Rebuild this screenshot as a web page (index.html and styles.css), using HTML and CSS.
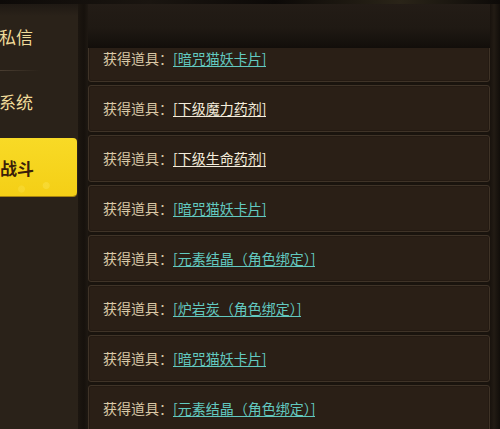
FILE: index.html
```html
<!DOCTYPE html>
<html lang="zh">
<head>
<meta charset="utf-8">
<title>战斗日志</title>
<link rel="stylesheet" href="styles.css">
</head>
<body>
<div class="screen">
  <div class="topstrip"></div>
  <div class="main">
    <nav class="tabs">
      <div class="tab">私信</div>
      <div class="sep"></div>
      <div class="tab">系统</div>
      <div class="tab active">战斗</div>
    </nav>
    <div class="divider"></div>
    <section class="log">
      <div class="header"></div>
      <div class="list">
        <div class="rows">
          <div class="row"><span class="label">获得道具：</span><span class="item teal">[暗咒猫妖卡片]</span></div>
          <div class="row"><span class="label">获得道具：</span><span class="item white">[下级魔力药剂]</span></div>
          <div class="row"><span class="label">获得道具：</span><span class="item white">[下级生命药剂]</span></div>
          <div class="row"><span class="label">获得道具：</span><span class="item teal">[暗咒猫妖卡片]</span></div>
          <div class="row"><span class="label">获得道具：</span><span class="item teal">[元素结晶（角色绑定）]</span></div>
          <div class="row"><span class="label">获得道具：</span><span class="item teal">[炉岩炭（角色绑定）]</span></div>
          <div class="row"><span class="label">获得道具：</span><span class="item teal">[暗咒猫妖卡片]</span></div>
          <div class="row"><span class="label">获得道具：</span><span class="item teal">[元素结晶（角色绑定）]</span></div>
        </div>
      </div>
    </section>
    <div class="edge"></div>
  </div>
</div>
</body>
</html>
```

FILE: styles.css
```css
html, body { margin:0; padding:0; background:#16110c; }
body { font-family:"Noto Sans CJK SC", "Noto Sans", sans-serif; }

.screen { width:500px; height:429px; overflow:hidden; display:flex; flex-direction:column; }
.topstrip { height:4px; background:linear-gradient(90deg, #0d0a08, #1a1510 30%, #0c0907 55%, #2a2418 80%, #0d0a08); }
.main { flex:1; display:flex; min-height:0; }

/* left tabs */
.tabs { width:78px; background:linear-gradient(#1f1913, #2a2219 12px, #2a2219); padding-top:2px; box-sizing:border-box; }
.tab { height:60px; display:flex; align-items:center; font-size:17px; color:#f1dc9a; margin-left:-1px; }
.sep { height:1px; margin-top:4px; background:linear-gradient(90deg, #4a3e31, rgba(74,62,49,0) 40px); }
.tab + .tab { height:57px; }
.tab.active { height:58px; margin-top:7px; margin-left:0; width:77px; box-sizing:border-box;
  background:radial-gradient(circle at 60% 82%, rgba(255,240,120,.25) 0 3px, transparent 4px),
             radial-gradient(circle at 28% 88%, rgba(255,240,120,.2) 0 3px, transparent 4px),
             linear-gradient(#f8da26, #f4cf16);
  border-radius:0 4px 4px 0; color:#3b1e0a; font-weight:bold; box-shadow:0 1px 0 #a8840e; }

.divider { width:10px; background:linear-gradient(90deg, #1c1610, #16110c 60%, #1e1812); }

/* log panel */
.log { width:402px; display:flex; flex-direction:column; background:#1a140e; }
.header { height:44px; background:linear-gradient(#231c16, #1f1913 55%, #120e0a); flex:none; }
.list { flex:1; overflow:hidden; }
.rows { margin-top:-13px; }
.row { height:47px; margin-bottom:3px; box-sizing:border-box; border:1px solid #3f3327; border-radius:3px;
  background:#2a1f16; box-shadow:inset 0 0 0 1px #241a12; display:flex; align-items:center; padding:0 0 1px 14px; font-size:14px; }
.label { color:#d9c8a6; }
.item { border-bottom:1px solid; line-height:16px; }
.teal { color:#62c9c0; border-color:#62c9c0; }
.white { color:#f4eddc; border-color:#f4eddc; }

.edge { width:10px; background:linear-gradient(90deg, #18120d, #221b14 40%, #120e0a); }
```
